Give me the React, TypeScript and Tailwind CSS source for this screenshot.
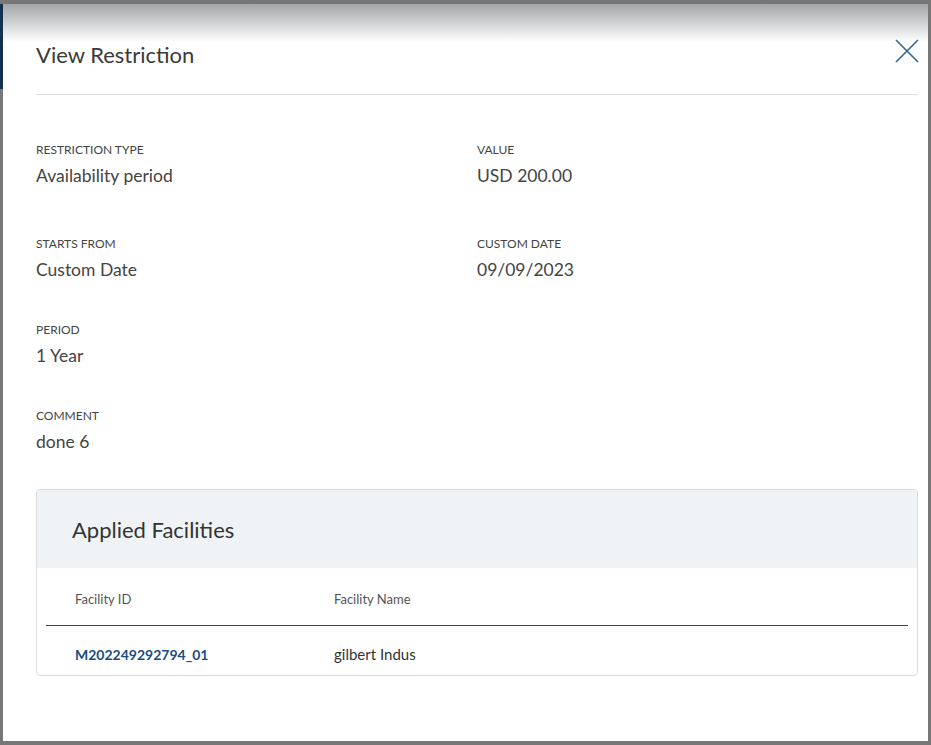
import React from 'react';

const FIELDS = [
  { label: 'RESTRICTION TYPE', value: 'Availability period', right: { label: 'VALUE', value: 'USD 200.00' } },
  { label: 'STARTS FROM', value: 'Custom Date', right: { label: 'CUSTOM DATE', value: '09/09/2023' } },
  { label: 'PERIOD', value: '1 Year' },
  { label: 'COMMENT', value: 'done 6' },
];

const FACILITIES = [{ id: 'M202249292794_01', name: 'gilbert Indus' }];

function Field({ label, value }: { label: string; value: string }) {
  return (
    <div>
      <div className="text-[12px] leading-[16px] text-[#444]">{label}</div>
      <div className="mt-[6px] text-[17.5px] leading-[24px] text-[#444]">{value}</div>
    </div>
  );
}

export default function App() {
  return (
    <div
      className="flex h-[745px] w-full bg-[#777] pt-[4px] pb-[4px]"
      style={{ fontFamily: 'Lato, "Open Sans", sans-serif' }}
    >
      {/* page behind the overlay */}
      <div className="w-[3px] flex-none">
        <div className="h-[85px] bg-[#14304f]" />
      </div>

      <div className="relative flex-1 bg-white">
        {/* scroll shadow at the top */}
        <div className="pointer-events-none absolute inset-x-0 top-0 h-[38px] bg-gradient-to-b from-[#a3a5a8] to-white/0" />

        <div className="pl-[33px] pr-[10px] pt-[31px]">
          <div className="flex items-center justify-between border-b border-[#dedede] pb-[19px]">
            <h1 className="text-[22px] leading-[40px] text-[#3a3a3a]">View Restriction</h1>
            <button className="mr-[-2px] mb-[8px] text-[#356b99]">
              <svg width="26" height="26" viewBox="0 0 26 26" fill="none" stroke="currentColor" strokeWidth="1.7">
                <path d="M2 2 L24 24 M24 2 L2 24" />
              </svg>
            </button>
          </div>

          <div className="mt-[47px] flex flex-col gap-[40px]">
            {FIELDS.map((f, i) => (
              <div key={f.label} className={`grid grid-cols-2 ${i === 0 ? 'mb-[8px]' : ''}`}>
                <Field label={f.label} value={f.value} />
                {f.right ? <Field label={f.right.label} value={f.right.value} /> : <div />}
              </div>
            ))}
          </div>

          <div className="mt-[35px] overflow-hidden rounded-[4px] border border-[#dcdcdc]">
            <div className="flex h-[78px] items-center bg-[#f0f3f6] px-[35px]">
              <h2 className="text-[22px] text-[#333]">Applied Facilities</h2>
            </div>
            <div className="px-[9px]">
              <div className="flex h-[58px] items-center border-b border-[#444] pt-[6px] text-[13px] text-[#555]">
                <div className="w-[288px] pl-[29px]">Facility ID</div>
                <div>Facility Name</div>
              </div>
              {FACILITIES.map(row => (
                <div key={row.id} className="flex h-[49px] items-center pt-[8px]">
                  <div className="w-[288px] pl-[29px] text-[14px] font-bold text-[#1a4d80]">{row.id}</div>
                  <div className="text-[15px] text-[#333]">{row.name}</div>
                </div>
              ))}
            </div>
          </div>
        </div>
      </div>

      <div className="w-[3px] flex-none" />
    </div>
  );
}
